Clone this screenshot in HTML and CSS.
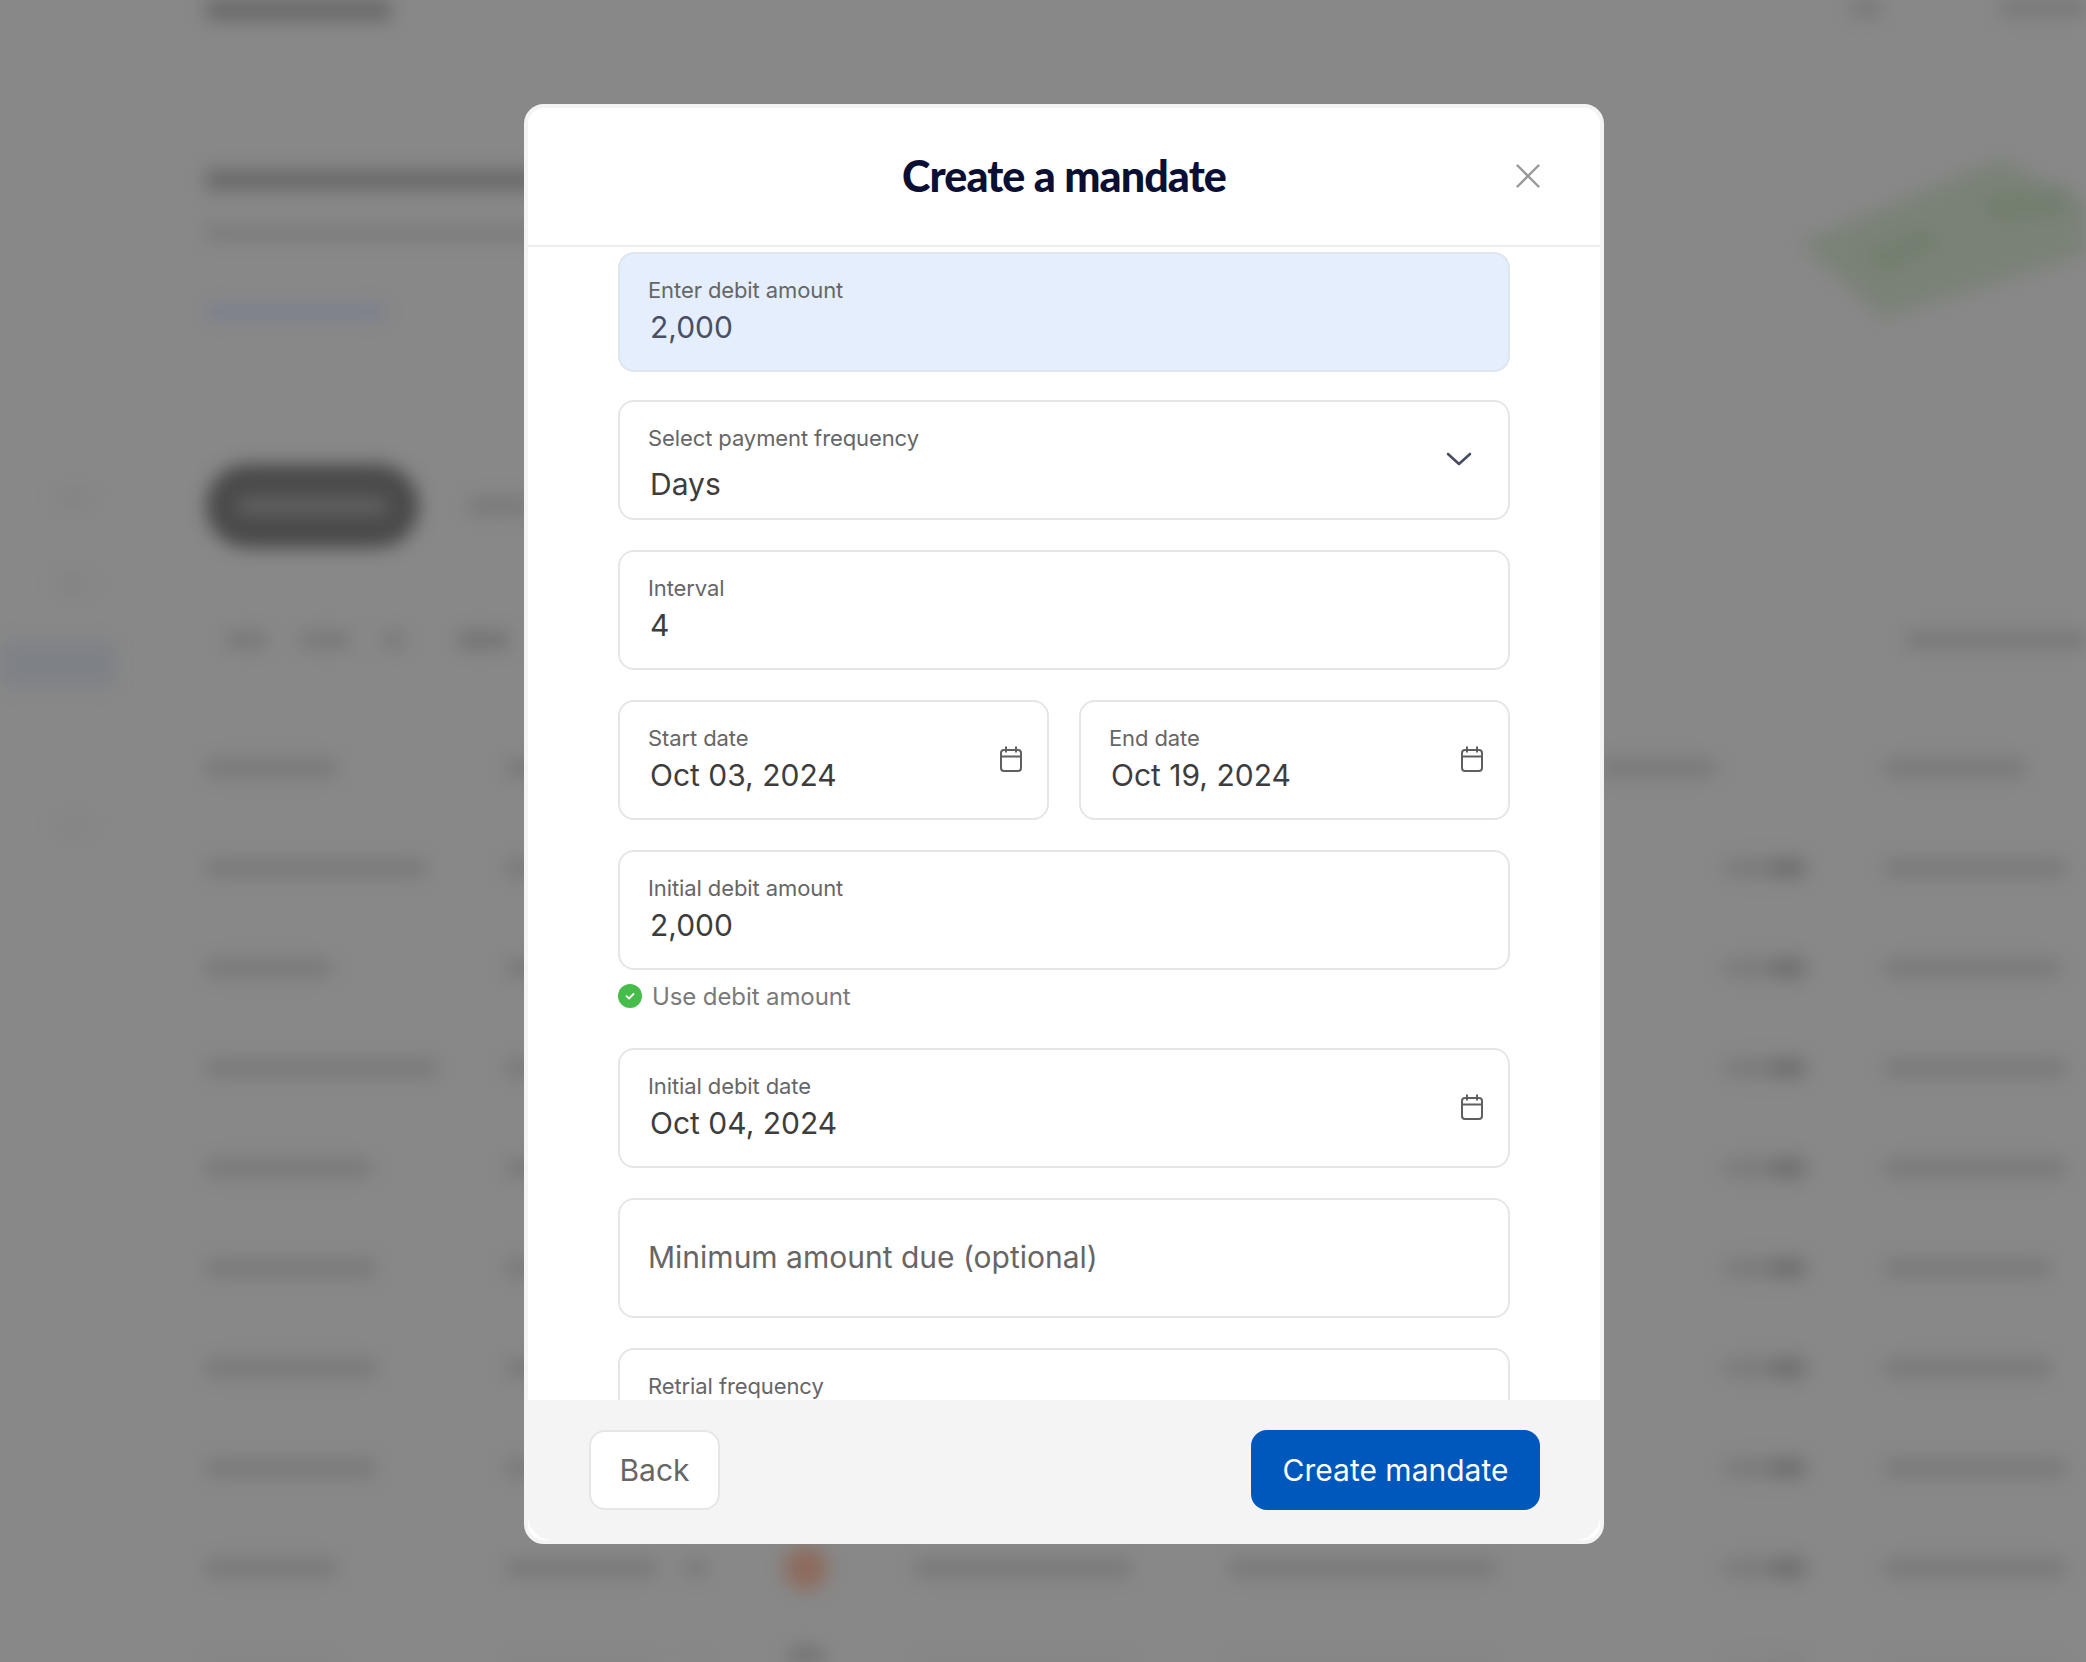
FILE: index.html
```html
<!DOCTYPE html>
<html lang="en">
<head>
<meta charset="utf-8">
<title>Create a mandate</title>
<link rel="stylesheet" href="styles.css">
</head>
<body>
<div class="backdrop" aria-hidden="true">
  <aside class="side">
    <div class="blob"></div>
    <div class="blob"></div>
    <div class="side-active"></div>
    <div class="blob blob-low"></div>
  </aside>
  <main class="page">
    <div class="topbar"><div class="bar bar-strong w185"></div><div class="top-right"><div class="bar w30"></div><div class="bar w85"></div></div></div>
    <svg class="card-art" viewBox="0 0 290 170"><polygon points="4,88 204,4 290,50 290,100 87,163" fill="#7a8276"/><polygon points="60,100 130,70 150,90 90,120" fill="#737f70"/><polygon points="180,40 270,30 280,60 200,70" fill="#737f70"/></svg>
    <div class="bar bar-strong hero-title"></div>
    <div class="bar hero-sub"></div>
    <div class="bar bar-link hero-link"></div>
    <div class="tabs"><div class="pill"><div class="pill-text"></div></div><div class="bar w60"></div></div>
    <div class="filters"><div class="bar w40"></div><div class="bar w50"></div><div class="bar w20"></div><div class="bar w50 bar-mid"></div><div class="bar w180 push"></div></div>
    <div class="trow thead"><div class="bar w130"></div><div class="bar w30"></div><span></span><span></span><div class="bar w115 th-amt"></div><span></span><div class="bar w140"></div></div>
    <div class="trow"><div class="bar w220"></div><div class="bar w30"></div><span></span><span></span><span></span><div class="amt"></div><div class="bar w180"></div></div>
    <div class="trow"><div class="bar w125"></div><div class="bar w30"></div><span></span><span></span><span></span><div class="amt"></div><div class="bar w175"></div></div>
    <div class="trow"><div class="bar w230"></div><div class="bar w30"></div><span></span><span></span><span></span><div class="amt"></div><div class="bar w180"></div></div>
    <div class="trow"><div class="bar w165"></div><div class="bar w30"></div><span></span><span></span><span></span><div class="amt"></div><div class="bar w180"></div></div>
    <div class="trow"><div class="bar w170"></div><div class="bar w30"></div><span></span><span></span><span></span><div class="amt"></div><div class="bar w165"></div></div>
    <div class="trow"><div class="bar w170"></div><div class="bar w30"></div><span></span><span></span><span></span><div class="amt"></div><div class="bar w165"></div></div>
    <div class="trow"><div class="bar w170"></div><div class="bar w30"></div><span></span><span></span><span></span><div class="amt"></div><div class="bar w180"></div></div>
    <div class="trow"><div class="bar w130"></div><div class="inline"><div class="bar w150"></div><div class="bar w20"></div></div><div class="avatar"></div><div class="bar w215"></div><div class="bar w265"></div><div class="amt"></div><div class="bar w180"></div></div>
    <div class="trow"><div class="bar w130"></div><div class="inline"><div class="bar w150"></div><div class="bar w20"></div></div><div class="avatar avatar-grey"></div><div class="bar w215"></div><div class="bar w265"></div><div class="amt"></div><div class="bar w180"></div></div>
  </main>
</div>

<div class="overlay">
  <section class="modal" role="dialog" aria-labelledby="modal-title">
    <header class="modal-head">
      <h1 class="modal-title" id="modal-title">Create a mandate</h1>
      <button class="close" type="button" aria-label="Close">
        <svg viewBox="0 0 24 24" width="24" height="24"><path d="M1.5 1.5l21 21M22.500 1.500l-21 21" fill="none" stroke="#999" stroke-width="2.4" stroke-linecap="round"/></svg>
      </button>
    </header>

    <div class="modal-body">
      <div class="field field-active">
        <span class="label">Enter debit amount</span>
        <span class="value value-slate">2,000</span>
      </div>

      <div class="field">
        <div class="field-text field-text-select">
          <span class="label">Select payment frequency</span>
          <span class="value">Days</span>
        </div>
        <svg class="chevron" viewBox="0 0 26 14" width="26" height="14"><path d="M2 2l11 10L24 2" fill="none" stroke="#474c63" stroke-width="2.6" stroke-linecap="round" stroke-linejoin="round"/></svg>
      </div>

      <div class="field">
        <span class="label">Interval</span>
        <span class="value">4</span>
      </div>

      <div class="field-row">
        <div class="field">
          <div class="field-text">
            <span class="label">Start date</span>
            <span class="value">Oct 03, 2024</span>
          </div>
          <svg class="cal" viewBox="0 0 24 26" width="24" height="26"><path d="M5 4h14a3 3 0 0 1 3 3v15a3 3 0 0 1-3 3H5a3 3 0 0 1-3-3V7a3 3 0 0 1 3-3zM2 10.500h20M7 .5v6M17 .5v6" fill="none" stroke="#5f5f5f" stroke-width="2"/></svg>
        </div>
        <div class="field">
          <div class="field-text">
            <span class="label">End date</span>
            <span class="value">Oct 19, 2024</span>
          </div>
          <svg class="cal" viewBox="0 0 24 26" width="24" height="26"><path d="M5 4h14a3 3 0 0 1 3 3v15a3 3 0 0 1-3 3H5a3 3 0 0 1-3-3V7a3 3 0 0 1 3-3zM2 10.500h20M7 .5v6M17 .5v6" fill="none" stroke="#5f5f5f" stroke-width="2"/></svg>
        </div>
      </div>

      <div class="field-group">
        <div class="field">
          <span class="label">Initial debit amount</span>
          <span class="value">2,000</span>
        </div>
        <div class="hint">
          <svg viewBox="0 0 24 24" width="24" height="24"><circle cx="12" cy="12" r="12" fill="#46bd4b"/><path d="M8.500 12.200l2.500 2.300 4.500-4.500" fill="none" stroke="#fff" stroke-width="1.800" stroke-linecap="round" stroke-linejoin="round"/></svg>
          <span>Use debit amount</span>
        </div>
      </div>

      <div class="field">
        <div class="field-text">
          <span class="label">Initial debit date</span>
          <span class="value">Oct 04, 2024</span>
        </div>
        <svg class="cal" viewBox="0 0 24 26" width="24" height="26"><path d="M5 4h14a3 3 0 0 1 3 3v15a3 3 0 0 1-3 3H5a3 3 0 0 1-3-3V7a3 3 0 0 1 3-3zM2 10.500h20M7 .5v6M17 .5v6" fill="none" stroke="#5f5f5f" stroke-width="2"/></svg>
      </div>

      <div class="field">
        <span class="placeholder">Minimum amount due (optional)</span>
      </div>

      <div class="field">
        <span class="label">Retrial frequency</span>
        <span class="value">&nbsp;</span>
      </div>
    </div>

    <footer class="modal-foot">
      <button class="btn btn-ghost" type="button">Back</button>
      <button class="btn btn-primary" type="button">Create mandate</button>
    </footer>
  </section>
</div>
</body>
</html>
```

FILE: styles.css
```css
* { box-sizing: border-box; }

html, body {
  margin: 0;
  height: 1662px;
  overflow: hidden;
  background: #888;
}

body {
  position: relative;
  font-family: "Inter", "Liberation Sans", sans-serif;
}

/* Blurred page behind the dialog */
.backdrop {
  display: flex;
  width: 2086px;
  height: 1662px;
  overflow: hidden;
  filter: blur(9px);
}

.side {
  flex: 0 0 206px;
  display: flex;
  flex-direction: column;
  padding-top: 488px;
}

.blob {
  flex: none;
  width: 36px;
  height: 20px;
  margin-left: 56px;
  margin-bottom: 66px;
  border-radius: 10px;
  background: #838383;
}

.side-active {
  flex: none;
  width: 115px;
  height: 44px;
  margin-top: -18px;
  margin-bottom: 130px;
  background: #7e8187;
}

.blob-low { background: #848484; }

.page {
  position: relative;
  flex: 1;
  display: flex;
  flex-direction: column;
  min-width: 0;
}

.page > * { flex: none; }

.bar {
  height: 16px;
  background: #777;
  border-radius: 4px;
}

.bar-strong { height: 20px; background: #686868; }
.bar-link { background: #787d8f; }
.bar-mid { background: #717171; }

.w20 { width: 20px; } .w30 { width: 30px; } .w40 { width: 40px; }
.w50 { width: 50px; } .w60 { width: 60px; } .w85 { width: 85px; }
.w115 { width: 115px; } .w125 { width: 125px; } .w130 { width: 130px; }
.w140 { width: 140px; } .w150 { width: 150px; } .w165 { width: 165px; }
.w170 { width: 170px; } .w175 { width: 175px; } .w180 { width: 180px; }
.w185 { width: 185px; } .w215 { width: 215px; } .w220 { width: 220px; }
.w230 { width: 230px; } .w265 { width: 265px; }

.topbar {
  display: flex;
  justify-content: space-between;
  height: 20px;
}

.top-right {
  display: flex;
  gap: 120px;
}

.card-art {
  position: absolute;
  left: 1590px;
  top: 155px;
  width: 290px;
  height: 170px;
}

.hero-title { width: 400px; margin-top: 150px; }
.hero-sub { width: 400px; margin-top: 37px; height: 12px; background: #777; }
.hero-link { width: 178px; margin-top: 67px; height: 12px; }

.tabs {
  display: flex;
  align-items: center;
  gap: 50px;
  margin-top: 146px;
}

.pill {
  width: 213px;
  height: 84px;
  padding: 0 32px;
  display: flex;
  align-items: center;
  border-radius: 42px;
  background: #4a4a4a;
}

.pill-text {
  width: 100%;
  height: 16px;
  background: #636363;
}

.filters {
  display: flex;
  align-items: center;
  gap: 34px;
  height: 60px;
  margin-top: 62px;
  padding-left: 20px;
}

.push { margin-left: auto; }

.filters .bar-mid { margin-left: 20px; }

.trow {
  display: grid;
  grid-template-columns: 300px 278px 131px 315px 495px 160px 1fr;
  align-items: center;
  height: 100px;
}

.thead { margin-top: 48px; }

.th-amt {
  justify-self: end;
  margin-right: 10px;
}

.inline {
  display: flex;
  gap: 30px;
}

.amt {
  width: 80px;
  height: 18px;
  background: linear-gradient(90deg, #7a7a7a 0 60%, #6c6c6c 60% 100%);
  border-radius: 4px;
}

.avatar {
  width: 44px;
  height: 44px;
  border-radius: 50%;
  background: #8d6b5d;
}

.avatar-grey { background: #6f6f6f; }

/* Dialog */
.overlay {
  position: absolute;
  inset: 0;
  padding: 104px 0 0 524px;
}

.modal {
  display: flex;
  flex-direction: column;
  width: 1080px;
  height: 1440px;
  border: 4px solid #f4f4f4;
  border-radius: 20px;
  background: #fff;
  overflow: hidden;
}

.modal-head {
  position: relative;
  flex: none;
  height: 139px;
  display: flex;
  align-items: center;
  justify-content: center;
  border-bottom: 2px solid #eee;
  padding-bottom: 2px;
}

.modal-title {
  margin: 0;
  font-family: "Lato", "Liberation Sans", sans-serif;
  font-size: 43px;
  font-weight: 900;
  letter-spacing: -0.9px;
  color: #0a0f33;
}

.close {
  position: absolute;
  right: 60px;
  top: 56px;
  width: 24px;
  height: 24px;
  padding: 0;
  border: 0;
  background: none;
  display: flex;
}

.modal-body {
  flex: 1;
  min-height: 0;
  overflow: hidden;
  display: flex;
  flex-direction: column;
  gap: 30px;
  padding: 5px 90px 0;
}

.field {
  flex: none;
  height: 120px;
  display: flex;
  flex-direction: column;
  justify-content: center;
  gap: 4px;
  padding: 0 24px 2px 28px;
  border: 2px solid #e6e6e6;
  border-radius: 16px;
  background: #fff;
}

.field:has(> .field-text) {
  flex-direction: row;
  align-items: center;
  justify-content: space-between;
}

.field-text {
  display: flex;
  flex-direction: column;
  gap: 4px;
}

.field-text-select {
  gap: 13px;
  padding-top: 8px;
}

.chevron { margin-right: 12px; }

.cal { margin-top: -1px; }

.field-active {
  margin-bottom: -2px;
  background: #e4eefc;
  border-color: #dfe6f0;
}

.label {
  font-size: 22px;
  line-height: 28px;
  letter-spacing: -0.1px;
  color: #666;
}

.value {
  font-size: 30px;
  line-height: 38px;
  margin-left: 2px;
  color: #3d3d3d;
}

.value-slate { color: #4a4f63; }

.placeholder {
  font-size: 30px;
  line-height: 38px;
  color: #666;
}

.field-row {
  flex: none;
  display: grid;
  grid-template-columns: 1fr 1fr;
  gap: 30px;
}

.field-group {
  flex: none;
  padding-bottom: 10px;
}

.hint {
  display: flex;
  align-items: center;
  gap: 10px;
  height: 24px;
  margin-top: 14px;
  font-size: 24px;
  letter-spacing: -0.1px;
  color: #7a7a7a;
}

.modal-foot {
  flex: none;
  display: flex;
  justify-content: space-between;
  align-items: flex-start;
  height: 140px;
  padding: 30px 60px 0 61px;
  background: #f4f4f4;
  border-radius: 0 0 24px 24px;
}

.btn {
  height: 80px;
  border-radius: 16px;
  font-family: inherit;
  font-size: 30px;
}

.btn-ghost {
  width: 131px;
  border: 2px solid #e6e6e6;
  background: #fff;
  color: #666;
}

.btn-primary {
  width: 289px;
  border: 0;
  background: #0057bc;
  color: #fff;
}
```
